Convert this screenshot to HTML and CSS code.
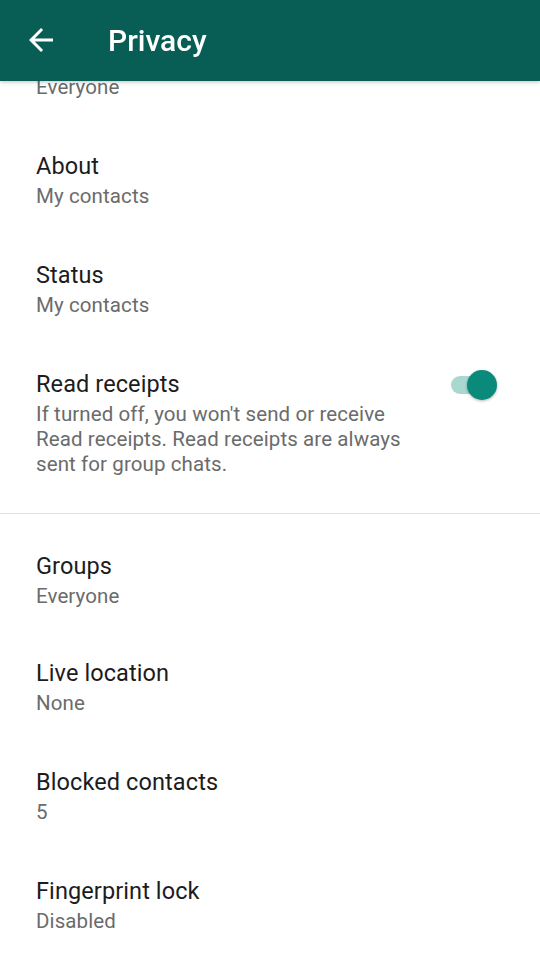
FILE: index.html
```html
<!DOCTYPE html>
<html lang="en">
<head>
    <meta charset="UTF-8">
    <meta name="viewport" content="width=device-width, initial-scale=1.0">
    <title>Privacy</title>
    <link rel="stylesheet" href="styles.css">
</head>
<body>

    <header class="toolbar">
        <svg class="back" viewBox="0 0 24 24" width="36" height="36">
            <path d="M20 11H7.83l5.59-5.59L12 4l-8 8 8 8 1.41-1.41L7.83 13H20v-2z" fill="#fff"/>
        </svg>
        <h1>Privacy</h1>
    </header>

    <main class="content">
        <div class="section">
            <div class="row">
                <div class="text">
                    <div class="title">Profile photo</div>
                    <div class="sub">Everyone</div>
                </div>
            </div>
            <div class="row">
                <div class="text">
                    <div class="title">About</div>
                    <div class="sub">My contacts</div>
                </div>
            </div>
            <div class="row">
                <div class="text">
                    <div class="title">Status</div>
                    <div class="sub">My contacts</div>
                </div>
            </div>
            <div class="row">
                <div class="text">
                    <div class="title">Read receipts</div>
                    <div class="sub">If turned off, you won't send or receive Read receipts. Read receipts are always sent for group chats.</div>
                </div>
                <div class="switch">
                    <span class="track"></span>
                    <span class="thumb"></span>
                </div>
            </div>
        </div>

        <div class="section second">
            <div class="row">
                <div class="text">
                    <div class="title">Groups</div>
                    <div class="sub">Everyone</div>
                </div>
            </div>
            <div class="row">
                <div class="text">
                    <div class="title">Live location</div>
                    <div class="sub">None</div>
                </div>
            </div>
            <div class="row">
                <div class="text">
                    <div class="title">Blocked contacts</div>
                    <div class="sub">5</div>
                </div>
            </div>
            <div class="row">
                <div class="text">
                    <div class="title">Fingerprint lock</div>
                    <div class="sub">Disabled</div>
                </div>
            </div>
        </div>
    </main>

</body>
</html>
```

FILE: styles.css
```css
body {
    margin: 0;
    font-family: Roboto, "Liberation Sans", sans-serif;
    background: #fff;
    overflow: hidden;
}
.toolbar {
    position: fixed;
    top: 0;
    left: 0;
    right: 0;
    height: 81px;
    background-color: #085e54;
    display: flex;
    align-items: center;
    box-shadow: 0 1px 4px rgba(0, 0, 0, 0.25);
    z-index: 2;
}
.back {
    margin-left: 23px;
    margin-top: -2px;
}
.toolbar h1 {
    margin: 0 0 0 49px;
    color: #fff;
    font-size: 30px;
    font-weight: 500;
}
.content {
    margin-top: 18px;
}
.section {
    padding-bottom: 9px;
    border-bottom: 1px solid #e3e3e3;
}
.section.second {
    border-bottom: none;
    padding-top: 13px;
}
.section.second .row:first-child {
    padding-bottom: 25px;
}
.row {
    display: flex;
    align-items: flex-start;
    padding: 24px 36px 27px 36px;
    min-height: 58px;
}
.text {
    flex: 1;
}
.title {
    font-size: 23.5px;
    line-height: 30px;
    letter-spacing: 0.1px;
    color: #1c1c1c;
}
.sub {
    margin-top: 3px;
    font-size: 20.5px;
    line-height: 25px;
    letter-spacing: 0.1px;
    color: #6b6b6b;
    max-width: 385px;
}
.switch {
    position: relative;
    width: 50px;
    height: 30px;
    margin-left: 10px;
    margin-right: 5px;
}
.track {
    position: absolute;
    left: 2px;
    top: 7px;
    width: 44px;
    height: 18px;
    border-radius: 9px;
    background: #a9d8d1;
}
.thumb {
    position: absolute;
    left: 18px;
    top: 1px;
    width: 30px;
    height: 30px;
    border-radius: 50%;
    background: #0a8a7b;
    box-shadow: 0 1px 3px rgba(0, 0, 0, 0.3);
}
```
